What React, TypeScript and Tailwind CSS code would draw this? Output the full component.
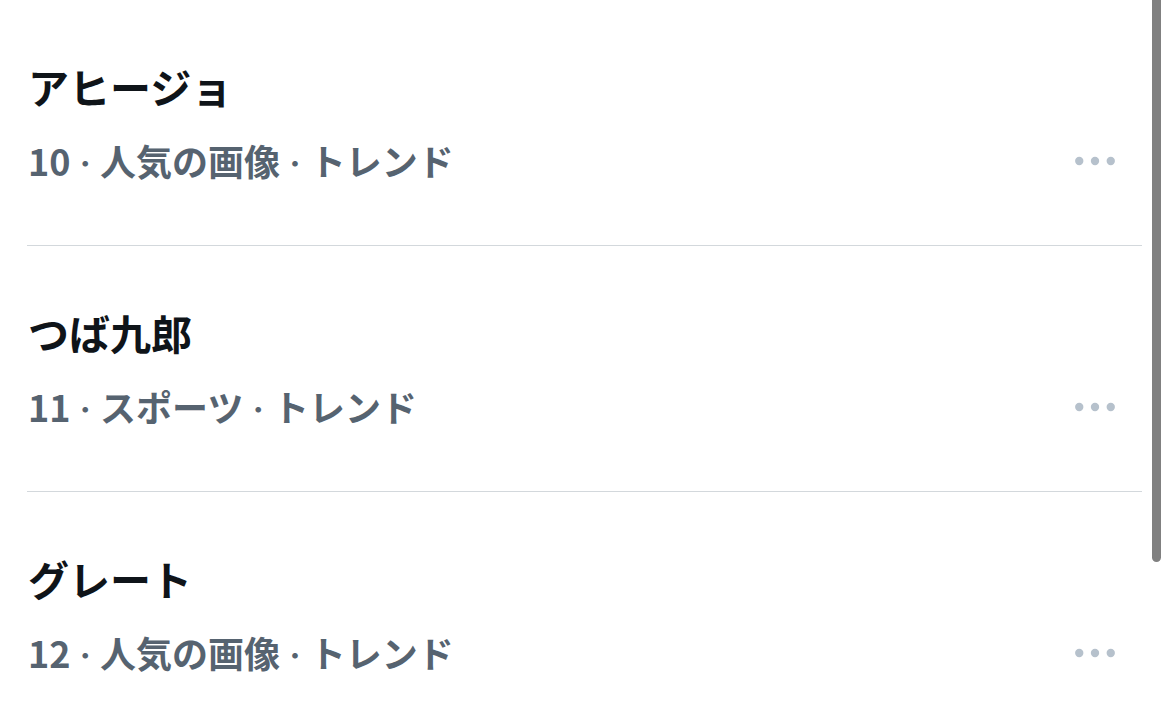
const trends = [
  { rank: 10, title: 'アヒージョ', category: '人気の画像' },
  { rank: 11, title: 'つば九郎', category: 'スポーツ' },
  { rank: 12, title: 'グレート', category: '人気の画像' },
];

function MoreIcon() {
  return (
    <svg viewBox="0 0 24 24" className="h-[54px] w-[54px] fill-[#b6c1cc]" aria-hidden>
      <circle cx="5" cy="12" r="1.85" />
      <circle cx="12" cy="12" r="1.85" />
      <circle cx="19" cy="12" r="1.85" />
    </svg>
  );
}

function Dot() {
  return <span className="font-['Inter',sans-serif]"> · </span>;
}

export default function App() {
  return (
    <div
      className="flex h-[723px] w-[1170px] overflow-hidden bg-white"
      style={{ fontFamily: '"Noto Sans CJK JP", sans-serif' }}
    >
      <ul className="ml-[27px] w-[1115px]">
        {trends.map((t) => (
          <li key={t.rank} className="flex h-[246px] items-start border-b border-[#d3d8dc]">
            <div className="flex min-w-0 flex-1 flex-col pl-px pt-[56px]">
              <span className="text-[41px] leading-[60px] font-bold text-[#0f1419]">{t.title}</span>
              <span className="mt-[18px] text-[36px] leading-[52px] font-semibold text-[#566370]">
                {t.rank}
                <Dot />
                {t.category}
                <Dot />
                トレンド
              </span>
            </div>
            <div className="mr-[20px] mt-[134px] flex shrink-0 items-center">
              <MoreIcon />
            </div>
          </li>
        ))}
      </ul>
      <div className="ml-[10px] w-[9px]">
        <div className="h-[562px] w-[9px] rounded-b-full bg-[#808080]" />
      </div>
    </div>
  );
}
